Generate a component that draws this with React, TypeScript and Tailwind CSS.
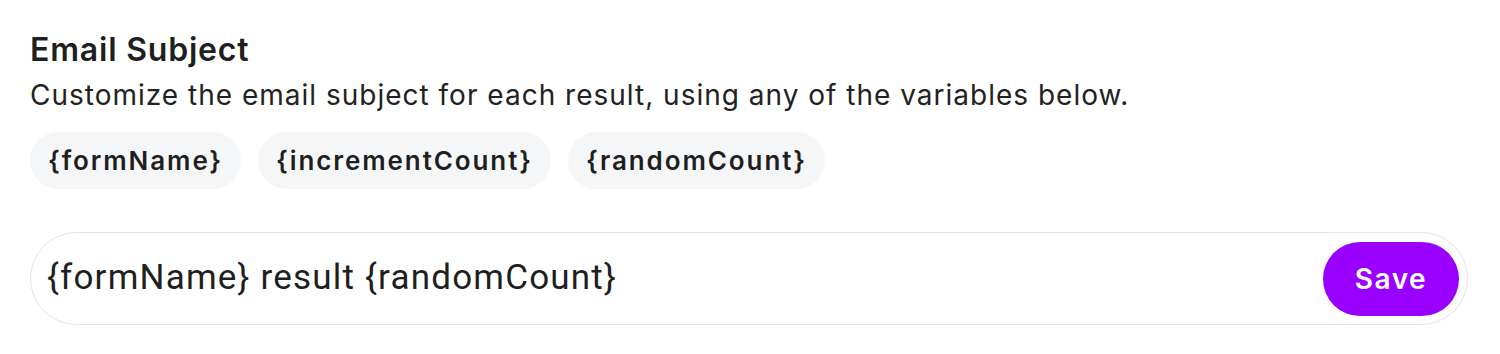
const variables = ['{formName}', '{incrementCount}', '{randomCount}'];

export default function App() {
  return (
    <div className="min-h-screen bg-white px-[30px] pt-[30px] font-['Inter',sans-serif] text-[#1f1f1f]">
      <h2 className="text-[32px] font-semibold leading-[40px] tracking-[0.8px]">Email Subject</h2>
      <p className="mt-[7px] text-[28px] leading-[36px] tracking-[1px] text-[#222]">
        Customize the email subject for each result, using any of the variables below.
      </p>
      <div className="mt-[19px] flex gap-[17px]">
        {variables.map((v) => (
          <span
            key={v}
            className="flex h-[57px] items-center rounded-full bg-[#f5f6f8] px-[18px] text-[26px] font-semibold tracking-[1.9px]"
          >
            {v}
          </span>
        ))}
      </div>
      <div className="mt-[43px] flex h-[93px] w-[1438px] items-center rounded-full border border-[#e3e4ea] pl-[16px] pr-[8px]">
        <input
          className="flex-1 bg-transparent font-['Roboto',sans-serif] text-[35px] tracking-[1.2px] text-[#1f1f1f] outline-none"
          defaultValue="{formName} result {randomCount}"
        />
        <button className="h-[74px] w-[136px] rounded-full bg-[#9900ff] text-[28px] font-semibold tracking-[1.5px] text-white">
          Save
        </button>
      </div>
    </div>
  );
}
